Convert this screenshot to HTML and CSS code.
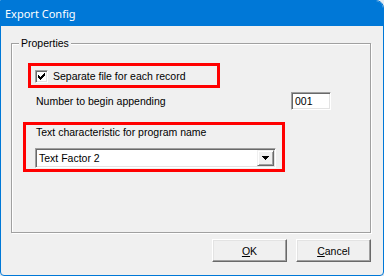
FILE: index.html
```html
<!DOCTYPE html>
<html>
<head>
<meta charset="utf-8">
<link rel="stylesheet" href="styles.css">
</head>
<body>
<div class="window">
  <div class="titlebar"><span class="title">Export Config</span></div>
  <div class="content">
    <fieldset class="group">
      <legend>Properties</legend>
      <div class="hl hl-check">
        <span class="box"><svg width="13" height="13" viewBox="0 0 13 13" shape-rendering="crispEdges"><path d="M3 5h1v3h-1z M4 6h1v3h-1z M5 7h1v3h-1z M6 6h1v3h-1z M7 5h1v3h-1z M8 4h1v3h-1z M9 3h1v3h-1z" fill="#000"/></svg></span>
        <span class="check-label">Separate file for each record</span>
      </div>
      <div class="row-num">
        <span>Number to begin appending</span>
        <span class="edit">001</span>
      </div>
      <div class="hl hl-combo">
        <div class="combo-label">Text characteristic for program name</div>
        <div class="combo">
          <span class="combo-text">Text Factor 2</span>
          <span class="combo-btn"><svg width="7" height="4" viewBox="0 0 7 4" shape-rendering="crispEdges"><path d="M0 0h7v1h-1v1h-1v1h-1v1h-1v-1h-1v-1h-1v-1h-1z" fill="#000"/></svg></span>
        </div>
      </div>
    </fieldset>
    <div class="buttons">
      <button class="btn"><u>O</u>K</button>
      <button class="btn"><u>C</u>ancel</button>
    </div>
  </div>
</div>
</body>
</html>
```
FILE: styles.css
```css
* { box-sizing: border-box; }
html, body { margin: 0; padding: 0; }
body {
  width: 384px;
  height: 276px;
  overflow: hidden;
  background: #e4ebf2;
  font-family: "Liberation Sans", Arial, sans-serif;
  font-size: 10.5px;
  color: #000;
}
.window {
  width: 384px;
  height: 276px;
  border: 1px solid #0078d7;
  border-radius: 0 8px 4px 4px;
  background: #f0f0f0;
  display: flex;
  flex-direction: column;
  overflow: hidden;
}
.titlebar {
  flex: none;
  height: 25px;
  background: #0078d7;
  color: #fff;
  font-family: "Noto Sans", sans-serif;
  font-size: 11px;
  display: flex;
  align-items: center;
  padding-left: 4px;
}
.title { line-height: 15px; }
.content {
  flex: 1;
  display: flex;
  flex-direction: column;
  padding: 11px 12px 0 10px;
}
.group {
  margin: 0;
  padding: 0;
  min-width: 0;
  height: 196px;
  border: 1px solid #a0a0a0;
  box-shadow: 1px 1px 0 #fff, inset 1px 1px 0 #fff;
}
.group legend {
  margin-left: 7px;
  padding: 0 2px;
  line-height: 13px;
  background: #f0f0f0;
}
.hl { border: 3px solid #ff0000; }
.hl-check {
  margin: 13px 0 0 16px;
  width: 192px;
  height: 25px;
  display: flex;
  align-items: center;
  padding: 2px 0 0 4px;
  line-height: 13px;
}
.box {
  width: 13px;
  height: 13px;
  background: #fff;
  border: 1px solid;
  border-color: #a0a0a0 #fff #fff #a0a0a0;
  box-shadow: inset 1px 1px 0 #696969, inset -1px -1px 0 #e3e3e3;
  display: block;
}
.box svg { display: block; margin: -1px 0 0 -1px; }
.check-label { margin-left: 5px; }
.row-num {
  margin: 4px 0 0 24px;
  width: 295px;
  display: flex;
  align-items: center;
  justify-content: space-between;
  line-height: 13px;
}
.edit {
  width: 40px;
  height: 18px;
  background: #fff;
  border: 1px solid;
  border-color: #a0a0a0 #fff #fff #a0a0a0;
  box-shadow: inset 1px 1px 0 #696969, inset -1px -1px 0 #e3e3e3;
  padding: 2px 0 0 3px;
  line-height: 13px;
}
.hl-combo {
  margin: 12px 0 0 11px;
  width: 262px;
  height: 50px;
  padding: 1px 0 0 9px;
}
.combo-label { line-height: 13px; padding-left: 1px; }
.combo {
  margin-top: 9px;
  width: 241px;
  height: 20px;
  display: flex;
  background: #fff;
  border: 1px solid;
  border-color: #a0a0a0 #fff #fff #a0a0a0;
  box-shadow: inset 1px 1px 0 #696969, inset -1px -1px 0 #e3e3e3;
  padding: 1px;
}
.combo-text { flex: 1; padding-left: 2px; line-height: 16px; }
.combo-btn {
  width: 17px;
  background: #f0f0f0;
  border: 1px solid;
  border-color: #f0f0f0 #696969 #696969 #f0f0f0;
  box-shadow: inset 1px 1px 0 #fff, inset -1px -1px 0 #a0a0a0;
  display: flex;
  align-items: center;
  justify-content: center;
}
.combo-btn svg { display: block; }
.buttons {
  display: flex;
  justify-content: flex-end;
  gap: 9px;
  margin-top: 6px;
}
.btn {
  width: 75px;
  height: 23px;
  padding: 0;
  font: inherit;
  color: #000;
  background: #f0f0f0;
  border: 1px solid;
  border-color: #fff #696969 #696969 #fff;
  box-shadow: inset -1px -1px 0 #a0a0a0, inset 1px 1px 0 #e3e3e3;
}
```
